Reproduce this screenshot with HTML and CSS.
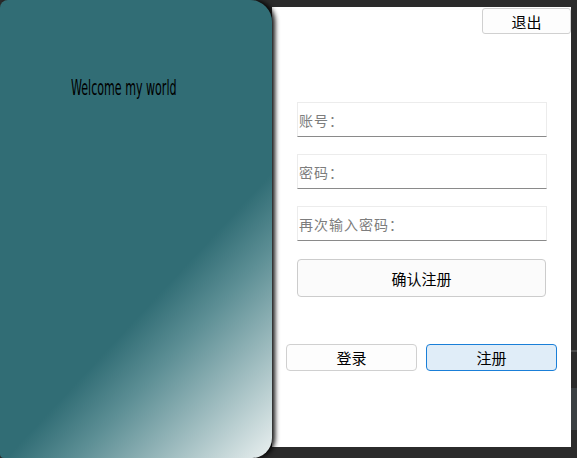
FILE: index.html
```html
<!DOCTYPE html>
<html>
<head>
<meta charset="utf-8">
<link rel="stylesheet" href="styles.css">
</head>
<body>
<div class="stage">
  <div class="hero">
    <div class="welcome">Welcome my world</div>
  </div>
  <div class="window">
    <div class="topbar"><button class="btn exit">退出</button></div>
    <div class="form">
      <input class="field first" placeholder="账号：">
      <input class="field" type="password" placeholder="密码：">
      <input class="field" type="password" placeholder="再次输入密码：">
      <button class="btn confirm">确认注册</button>
    </div>
    <div class="tabs">
      <button class="btn tab">登录</button>
      <button class="btn tab active">注册</button>
    </div>
  </div>
  <div class="edge">
    <div class="edge-line"></div>
    <div class="edge-block"></div>
  </div>
</div>
</body>
</html>
```
FILE: styles.css
```css
html, body {
  margin: 0;
  padding: 0;
  background: #2b2b2b;
  width: 577px;
  height: 458px;
  overflow: hidden;
  font-family: "Noto Sans CJK SC", "Liberation Sans", sans-serif;
}
.stage {
  display: flex;
  width: 577px;
  height: 458px;
}
.hero {
  position: relative;
  z-index: 2;
  flex: 0 0 272px;
  height: 458px;
  border-radius: 8px 22px 20px 4px;
  background: linear-gradient(133deg, #316d75 0%, #316d75 62%, #5d8f95 72%, #eaf0f0 100%);
  box-shadow: 3px 0 5px rgba(0, 0, 0, 0.95);
}
.welcome {
  margin: 77px 0 0 71px;
  font-family: "DejaVu Sans Condensed", "DejaVu Sans", sans-serif;
  font-size: 22px;
  line-height: 22px;
  color: #000;
  transform: scaleX(0.56);
  transform-origin: left center;
  white-space: nowrap;
}
.window {
  flex: 0 0 299px;
  margin-top: 7px;
  height: 440px;
  background: #ffffff;
  display: flex;
  flex-direction: column;
}
.topbar {
  display: flex;
  justify-content: flex-end;
  margin-top: 1px;
}
.btn {
  font-family: "Noto Sans CJK SC", sans-serif;
  font-size: 15px;
  color: #000;
  background: #fdfdfd;
  border: 1px solid #d0d0d0;
  border-radius: 4px;
  padding: 0;
  line-height: 1;
}
.exit {
  width: 89px;
  height: 26px;
  border-radius: 3px;
}
.form {
  display: flex;
  flex-direction: column;
  margin: 68px 0 0 25px;
  width: 250px;
}
.field {
  box-sizing: border-box;
  height: 35px;
  width: 250px;
  margin: 0 0 17px 0;
  padding: 0 0 0 1px;
  border: 1px solid #ececec;
  border-bottom: 1px solid #8a8a8a;
  background: #fff;
  font-family: "Noto Sans CJK SC", sans-serif;
  font-size: 14px;
  color: #333;
  outline: none;
}
.field::placeholder {
  color: #7d7d7d;
  letter-spacing: 1px;
}
.confirm {
  box-sizing: border-box;
  margin: 1px 0 0 0;
  width: 249px;
  height: 38px;
  background: #fbfbfb;
  border-color: #cccccc;
}
.tabs {
  display: flex;
  gap: 9px;
  margin: 47px 0 0 14px;
}
.tab {
  box-sizing: border-box;
  width: 131px;
  height: 27px;
}
.tab.active {
  background: #e0edf8;
  border-color: #1a7fd8;
}
.edge {
  flex: 1;
  display: flex;
  flex-direction: column;
}
.edge-line {
  margin-top: 350px;
  height: 2px;
  background: #4a4a4a;
}
.edge-block {
  margin-top: 36px;
  height: 42px;
  background: #3b4043;
}
```
